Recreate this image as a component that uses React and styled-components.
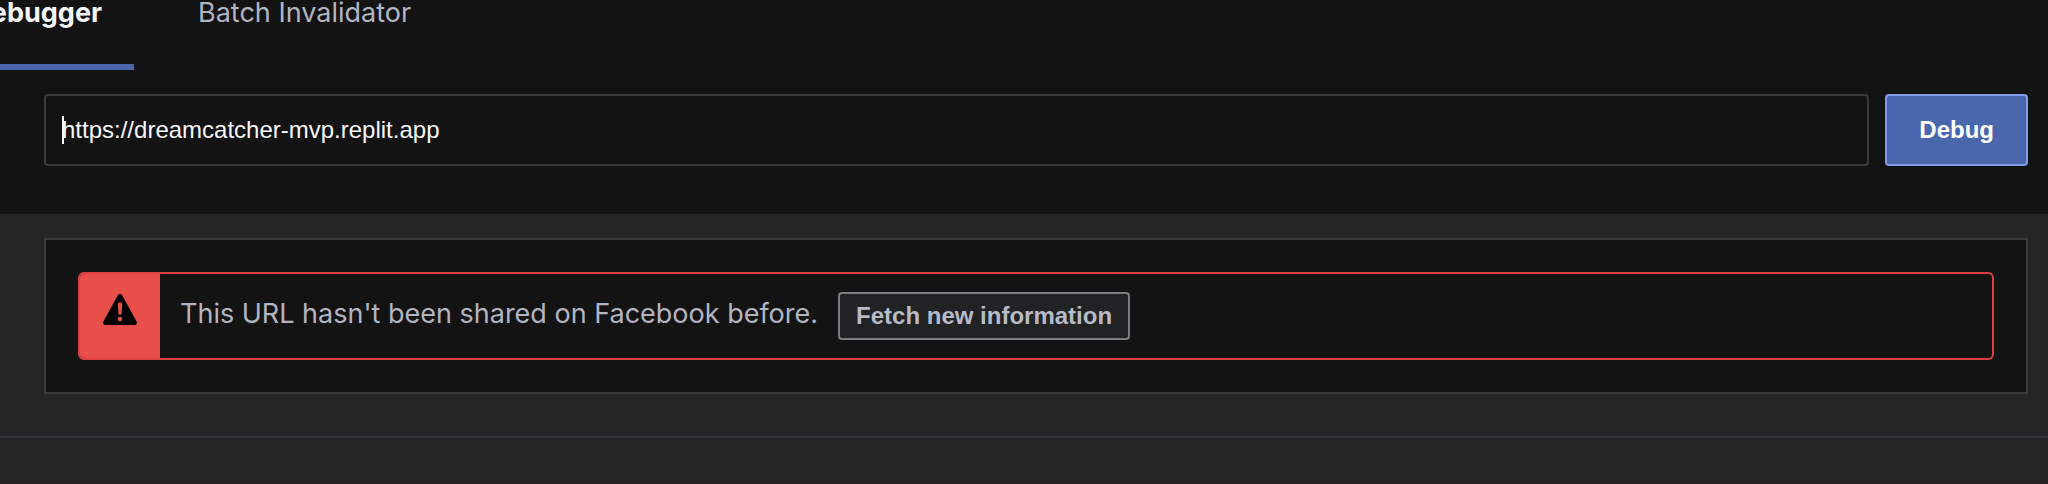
import React from "react";
import styled, { createGlobalStyle } from "styled-components";

const GlobalStyle = createGlobalStyle`
  * { box-sizing: border-box; }
  body {
    margin: 0;
    background: #252525;
    font-family: Inter, sans-serif;
    font-size: 27px;
    line-height: 36px;
    color: #b2b5c0;
  }
`;

const Header = styled.header`
  background: #131313;
`;

const Tabs = styled.nav`
  display: flex;
  height: 70px;
`;

const Tab = styled.a`
  display: flex;
  flex: none;
  justify-content: flex-end;
  width: ${(p) => (p.$active ? "134px" : "auto")};
  height: 70px;
  padding: 0 32px 24px 64px;
  align-items: flex-start;
  white-space: nowrap;
  text-decoration: none;
  line-height: 26px;
  color: ${(p) => (p.$active ? "#f5f6fa" : "inherit")};
  font-weight: ${(p) => (p.$active ? 700 : 400)};
  border-bottom: 6px solid ${(p) => (p.$active ? "#4a67ae" : "transparent")};
`;

const SearchForm = styled.form`
  display: flex;
  gap: 16px;
  padding: 24px 20px 48px 44px;
`;

const Field = styled.label`
  position: relative;
  display: flex;
  flex: 1;
`;

const UrlInput = styled.input`
  width: 100%;
  height: 72px;
  padding: 0 16px;
  border: 2px solid #3a3a3a;
  border-radius: 4px;
  outline: none;
  background: transparent;
  color: #f5f6fa;
  font: 24px "Liberation Sans", Arial, sans-serif;
`;

const Caret = styled.span`
  position: absolute;
  left: 18px;
  top: 22px;
  width: 2px;
  height: 28px;
  background: #f5f6fa;
`;

const Button = styled.button`
  flex: none;
  height: ${(p) => (p.$primary ? "72px" : "48px")};
  padding: 0 ${(p) => (p.$primary ? "32px" : "16px")};
  border: 2px solid ${(p) => (p.$primary ? "#849bea" : "#7b7d80")};
  border-radius: 4px;
  background: ${(p) => (p.$primary ? "#4a67ae" : "#212224")};
  color: ${(p) => (p.$primary ? "#ffffff" : "#b8bac5")};
  font: bold 24px "Liberation Sans", Arial, sans-serif;
`;

const Results = styled.main`
  padding: 24px 20px 42px 44px;
  border-bottom: 2px solid #34343a;
`;

const Card = styled.section`
  padding: 32px;
  border: 2px solid #3a3a3a;
  background: #131313;
`;

const Alert = styled.div`
  display: flex;
  border: 2px solid #dd403e;
  border-radius: 6px;
`;

const AlertIcon = styled.div`
  display: flex;
  flex: none;
  justify-content: center;
  width: 80px;
  padding-top: 20px;
  border-radius: 4px 0 0 4px;
  background: #e84f4a;
`;

const AlertBody = styled.div`
  display: flex;
  align-items: center;
  gap: 20px;
  padding: 18px 20px;
`;

const Message = styled.p`
  margin: 0;
  padding-bottom: 4px;
`;

const Footer = styled.footer`
  height: 46px;
  border-bottom: 1px solid #2a2027;
`;

const WarningIcon = () => (
  <svg width="34" height="31" viewBox="0 0 34 31" aria-hidden="true">
    <path
      fillRule="evenodd"
      d="M14.7 1.4Q17-1.4 19.3 1.4L33.6 27.6Q34.6 30.8 31.6 31H2.4Q-.6 30.8.4 27.6ZM14.8 9.8Q17 7.2 19.2 9.8L18.6 19.8Q17 22 15.4 19.8ZM17 22.8a2.2 2.2 0 1 0 0 4.4a2.2 2.2 0 1 0 0-4.4Z"
    />
  </svg>
);

export default function App() {
  return (
    <>
      <GlobalStyle />
      <Header>
        <Tabs>
          <Tab href="#debugger" $active>Debugger</Tab>
          <Tab href="#batch">Batch Invalidator</Tab>
        </Tabs>
        <SearchForm onSubmit={(e) => e.preventDefault()}>
          <Field>
            <UrlInput type="text" aria-label="URL" defaultValue="https://dreamcatcher-mvp.replit.app" />
            <Caret />
          </Field>
          <Button type="submit" $primary>Debug</Button>
        </SearchForm>
      </Header>
      <Results>
        <Card>
          <Alert role="alert">
            <AlertIcon><WarningIcon /></AlertIcon>
            <AlertBody>
              <Message>This URL hasn't been shared on Facebook before.</Message>
              <Button type="button">Fetch new information</Button>
            </AlertBody>
          </Alert>
        </Card>
      </Results>
      <Footer />
    </>
  );
}
